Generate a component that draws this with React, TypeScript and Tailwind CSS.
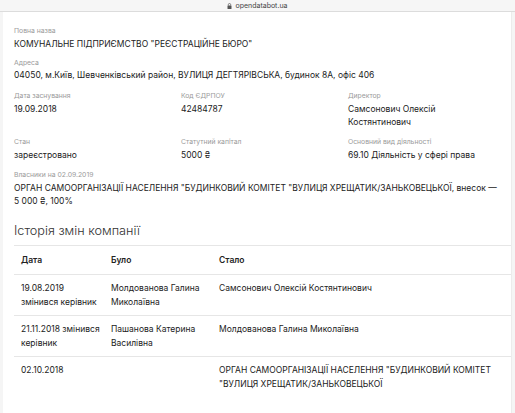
import type { ReactNode } from "react";

function Field({ label, children }: { label: string; children: ReactNode }) {
  return (
    <div>
      <div className="text-[6.8px] leading-[10px] text-[#9a9a9a]">{label}</div>
      <div className="mt-[1.5px] text-[8.5px] leading-[13px] text-[#222]">{children}</div>
    </div>
  );
}

const rows = [
  {
    date: "19.08.2019\nзмінився керівник",
    was: "Молдованова Галина Миколаївна",
    now: "Самсонович Олексій Костянтинович",
  },
  {
    date: "21.11.2018 змінився керівник",
    was: "Пашанова Катерина Василівна",
    now: "Молдованова Галина Миколаївна",
  },
  {
    date: "02.10.2018",
    was: "",
    now: 'ОРГАН САМООРГАНІЗАЦІЇ НАСЕЛЕННЯ "БУДИНКОВИЙ КОМІТЕТ "ВУЛИЦЯ ХРЕЩАТИК/ЗАНЬКОВЕЦЬКОЇ',
  },
];

export default function App() {
  return (
    <div
      className="h-[413px] overflow-hidden bg-[#f5f5f5] flex flex-col"
      style={{ fontFamily: "Inter, 'Noto Sans', sans-serif" }}
    >
      {/* Browser address bar */}
      <div className="h-[12px] shrink-0 bg-[#f6f6f6] border-b border-[#dcdcdc] flex items-center justify-center gap-[3px]">
        <svg width="5" height="6" viewBox="0 0 5 6">
          <rect x="0.5" y="2.5" width="4" height="3.5" rx="0.5" fill="#555" />
          <path d="M1.3 2.6V1.7a1.2 1.2 0 0 1 2.4 0v0.9" fill="none" stroke="#555" strokeWidth="0.7" />
        </svg>
        <span className="text-[7px] leading-none text-[#444]">opendatabot.ua</span>
      </div>

      {/* Card */}
      <div className="flex-1 ml-[3px] mr-[3px] bg-white border-r border-[#ececec] pl-[11px] pr-[12px] pt-[14px]">
        <Field label="Повна назва">КОМУНАЛЬНЕ ПІДПРИЄМСТВО "РЕЄСТРАЦІЙНЕ БЮРО"</Field>
        <div className="mt-[7px]">
          <Field label="Адреса">
            04050, м.Київ, Шевченківський район, ВУЛИЦЯ ДЕГТЯРІВСЬКА, будинок 8А, офіс 406
          </Field>
        </div>
        <div className="mt-[9px] grid grid-cols-[167px_167px_1fr]">
          <Field label="Дата заснування">19.09.2018</Field>
          <Field label="Код ЄДРПОУ">42484787</Field>
          <Field label="Директор">
            Самсонович Олексій
            <br />
            Костянтинович
          </Field>
        </div>
        <div className="mt-[8.5px] grid grid-cols-[167px_167px_1fr]">
          <Field label="Стан">зареєстровано</Field>
          <Field label="Статутний капітал">5000 ₴</Field>
          <Field label="Основний вид діяльності">69.10 Діяльність у сфері права</Field>
        </div>
        <div className="mt-[8.5px]">
          <Field label="Власники на 02.09.2019">
            ОРГАН САМООРГАНІЗАЦІЇ НАСЕЛЕННЯ "БУДИНКОВИЙ КОМІТЕТ "ВУЛИЦЯ ХРЕЩАТИК/ЗАНЬКОВЕЦЬКОЇ, внесок —
            5 000 ₴, 100%
          </Field>
        </div>

        <h2 className="mt-[14px] text-[12.7px] leading-[18px] font-light text-[#333]">Історія змін компанії</h2>

        <table className="mt-[5px] table-fixed w-[calc(100%+12px)] border-collapse text-[8.5px] text-[#222]">
          <colgroup>
            <col className="w-[90px]" />
            <col className="w-[108px]" />
            <col />
          </colgroup>
          <thead>
            <tr className="border-t border-b border-[#e6e6e6]">
              <th className="pl-[7px] pr-0 py-[7px] leading-[14px] text-left font-semibold">Дата</th>
              <th className="pl-[7px] pr-0 py-[7px] leading-[14px] text-left font-semibold">Було</th>
              <th className="pl-[7px] pr-0 py-[7px] leading-[14px] text-left font-semibold">Стало</th>
            </tr>
          </thead>
          <tbody>
            {rows.map((r, i) => (
              <tr key={i} className={i < rows.length - 1 ? "border-b border-[#e6e6e6]" : ""}>
                <td className="pl-[7px] pr-0 py-[6px] leading-[14px] align-top whitespace-pre-line">{r.date}</td>
                <td className="pl-[7px] pr-0 py-[6px] leading-[14px] align-top">{r.was}</td>
                <td className="pl-[7px] pr-[20px] py-[6px] leading-[14px] align-top">{r.now}</td>
              </tr>
            ))}
          </tbody>
        </table>

        <h2 className="mt-[17px] text-[12.7px] leading-[18px] font-light text-[#333]">Схожі компанії</h2>
      </div>
    </div>
  );
}
